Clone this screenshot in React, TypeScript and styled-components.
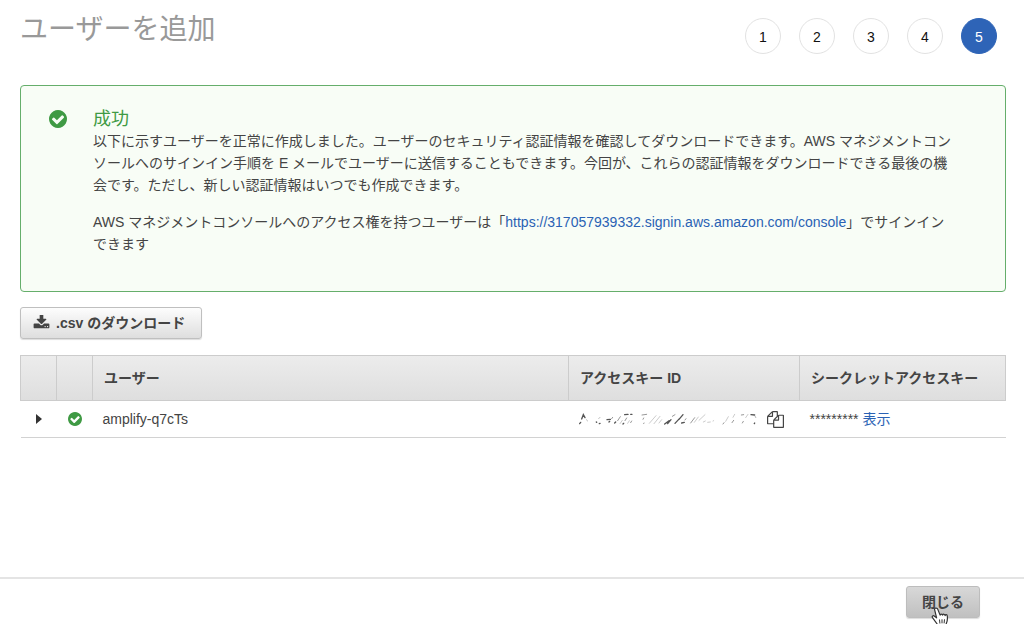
import React from 'react';
import styled, { createGlobalStyle, css } from 'styled-components';

const GlobalStyle = createGlobalStyle`
  *, *::before, *::after { box-sizing: border-box; }
  body {
    margin: 0;
    background: #fff;
    color: #444;
    font-family: "Liberation Sans", "Noto Sans CJK JP", sans-serif;
    font-size: 14px;
    line-height: 22px;
  }
`;

const Page = styled.div`
  display: flex;
  flex-direction: column;
  min-height: 100vh;
`;

const Header = styled.header`
  display: flex;
  justify-content: space-between;
  align-items: flex-start;
  padding: 10px 27px 0 20px;
`;

const Title = styled.h1`
  margin: 0;
  color: #999;
  font-size: 28px;
  font-weight: 400;
  line-height: 40px;
`;

const Steps = styled.ol`
  display: flex;
  gap: 18px;
  margin: 0;
  padding: 8px 0 0;
  list-style: none;
`;

const Step = styled.li<{ $current?: boolean }>`
  display: flex;
  align-items: center;
  justify-content: center;
  width: 36px;
  height: 36px;
  padding-top: 2px;
  border: 1px solid ${p => (p.$current ? '#2e64b7' : '#e2e2e2')};
  border-radius: 50%;
  background: ${p => (p.$current ? '#2e64b7' : '#fff')};
  color: ${p => (p.$current ? '#fff' : '#111')};
`;

const Main = styled.main`
  flex: 1;
  padding: 31px 18px 20px 20px;
`;

const Banner = styled.section`
  display: flex;
  gap: 26px;
  padding: 22px 28px 36px;
  border: 1px solid #65ae6b;
  border-radius: 4px;
  background: #f8fdf6;
`;

const BannerIcon = styled.div`
  display: flex;
  width: 18px;
  padding-top: 2px;
`;

const BannerTitle = styled.h2`
  margin: 0;
  color: #3f9a44;
  font-size: 18px;
  font-weight: 400;
  line-height: 22px;
`;

const Paragraph = styled.p`
  margin: 0 0 15px;
  &:last-child { margin-bottom: 0; }
`;

const Link = styled.a`
  color: #2a62b4;
  text-decoration: none;
`;

const Glyph = styled.svg<{ $size: number }>`
  display: block;
  flex: none;
  width: ${p => p.$size}px;
  height: ${p => p.$size}px;
  fill: currentColor;
`;

const Success = styled.span`
  display: flex;
  justify-content: center;
  color: #3f9a44;
`;

const Button = styled.button<{ $pressed?: boolean }>`
  display: inline-flex;
  align-items: center;
  gap: 6px;
  height: 32px;
  padding: 0 16px 0 12px;
  border: 1px solid #bfbfbf;
  border-radius: 3px;
  background: linear-gradient(#fdfdfd, #dedede);
  box-shadow: 0 1px 1px #ddd;
  color: #444;
  font: inherit;
  font-weight: 700;
  cursor: pointer;
  ${p => p.$pressed && css`
    padding: 0 15px;
    border-color: #bdbdbd;
    background: linear-gradient(#d8d8d8, #c0c0c0);
  `}
`;

const Toolbar = styled.div`
  display: flex;
  padding: 15px 0 16px;
`;

const Table = styled.table`
  width: 100%;
  border-collapse: collapse;
  table-layout: fixed;
`;

const HeadRow = styled.tr`
  height: 45px;
  background: linear-gradient(#ececec, #dedede);
`;

const HeadCell = styled.th<{ $width?: string }>`
  width: ${p => p.$width ?? 'auto'};
  padding: 0 11px;
  border: 1px solid #ccc;
  text-align: left;
`;

const BodyRow = styled.tr`
  height: 37px;
  border-bottom: 1px solid #d2d2d2;
`;

const Cell = styled.td`
  padding: 0 10px;
`;

const Expand = styled.button`
  display: flex;
  margin: 0 auto;
  padding: 0;
  border: 0;
  background: none;
  color: #333;
`;

const KeyLine = styled.div`
  display: flex;
  align-items: center;
  gap: 10px;
`;

const CopyButton = styled.button`
  padding: 0;
  border: 0;
  background: none;
  color: #444;
`;

const Footer = styled.footer`
  display: flex;
  justify-content: flex-end;
  padding: 7px 44px 6px;
  border-top: 2px solid #e4e4e4;
`;

const CloseArea = styled.div`
  position: relative;
  display: flex;
`;

const Pointer = styled.svg`
  position: absolute;
  top: 21px;
  left: 25px;
  width: 18px;
  height: 20px;
  pointer-events: none;
`;

const CheckIcon = ({ size }: { size: number }) => (
  <Glyph $size={size} viewBox="128 128 1536 1536" aria-hidden="true">
    <path d="M1412 734q0-28-18-46l-91-90q-19-19-45-19t-45 19l-408 407-226-226q-19-19-45-19t-45 19l-91 90q-18 18-18 46 0 27 18 45l362 362q19 19 45 19 27 0 46-19l543-543q18-18 18-45zm252 162q0 209-103 385.5t-279.5 279.5-385.5 103-385.5-103-279.5-279.5-103-385.5 103-385.5 279.5-279.5 385.5-103 385.5 103 279.5 279.5 103 385.5z" />
  </Glyph>
);

const DownloadIcon = () => (
  <Glyph $size={17} viewBox="0 128 1792 1792" aria-hidden="true">
    <path d="M1344 1344q0-26-19-45t-45-19-45 19-19 45 19 45 45 19 45-19 19-45zm256 0q0-26-19-45t-45-19-45 19-19 45 19 45 45 19 45-19 19-45zm128-224v320q0 40-28 68t-68 28h-1472q-40 0-68-28t-28-68v-320q0-40 28-68t68-28h465l135 136q58 56 136 56t136-56l136-136h464q40 0 68 28t28 68zm-325-569q17 41-14 70l-448 448q-18 19-45 19t-45-19l-448-448q-31-29-14-70 17-39 59-39h256v-448q0-26 19-45t45-19h256q26 0 45 19t19 45v448h256q42 0 59 39z" />
  </Glyph>
);

const CopyIcon = () => (
  <Glyph $size={17} viewBox="0 0 1792 1792" aria-hidden="true">
    <path d="M1696 384q40 0 68 28t28 68v1216q0 40-28 68t-68 28h-960q-40 0-68-28t-28-68v-288h-544q-40 0-68-28t-28-68v-672q0-40 20-88t48-76l408-408q28-28 76-48t88-20h416q40 0 68 28t28 68v328q68-40 128-40h416zm-544 213l-299 299h299v-299zm-640-384l-299 299h299v-299zm196 647l316-316v-416h-384v416q0 40-28 68t-68 28h-416v640h512v-256q0-40 20-88t48-76zm956 804v-1152h-384v416q0 40-28 68t-68 28h-416v640h896z" />
  </Glyph>
);

/* The key is scratched out; only scattered slanted remnants stay visible. */
const ObscuredKey = () => (
  <svg width="178" height="14" viewBox="90 216 534 42" fill="none" strokeLinecap="round" role="img" aria-label="アクセスキー ID">
    <g stroke="#555" strokeWidth="4">
      <path d="M92 251l3-4M98 237l5-13 5 9M142 246l1 1M151 251l2-1M174 239l10-1M180 246l2-2M197 249l3-3M222 252l2-2M227 224l10-1M245 223l4 0M347 252l14-10M356 251l10-12M378 250l14-15M390 238l12-14M398 249l8-2M606 224l11 1M616 251l1-2" />
    </g>
    <g stroke="#999" strokeWidth="3">
      <path d="M113 240l2 2M150 235l2-2M188 236l3-4M206 242l8-12M228 242l5-8M245 248l3-5M279 225l14-2M282 238l2-4M284 251l1-2M370 229l8-5M408 240l3-4M425 249l12-16M522 252l3-4M549 248l5-7M580 249l3-5M577 225l7-1M619 230l1 2" />
    </g>
    <g stroke="#ccc" strokeWidth="3">
      <path d="M301 250l20-23M315 251l18-22M330 249l8-10M436 247l12-16M450 241l18-17M463 246l6-3M476 247l8-1M492 243l2-1M530 244l8-14M552 232l5-9M590 233l7-10M213 251l7-10M236 250l5-8" />
    </g>
  </svg>
);

export default function App() {
  return (
    <>
      <GlobalStyle />
      <Page>
        <Header>
          <Title>ユーザーを追加</Title>
          <Steps>
            {[1, 2, 3, 4, 5].map(n => (
              <Step key={n} $current={n === 5} aria-current={n === 5 ? 'step' : undefined}>{n}</Step>
            ))}
          </Steps>
        </Header>
        <Main>
          <Banner>
            <BannerIcon><Success><CheckIcon size={18} /></Success></BannerIcon>
            <div>
              <BannerTitle>成功</BannerTitle>
              <Paragraph>
                以下に示すユーザーを正常に作成しました。ユーザーのセキュリティ認証情報を確認してダウンロードできます。AWS マネジメントコン<br />
                ソールへのサインイン手順を E メールでユーザーに送信することもできます。今回が、これらの認証情報をダウンロードできる最後の機<br />
                会です。ただし、新しい認証情報はいつでも作成できます。
              </Paragraph>
              <Paragraph>
                AWS マネジメントコンソールへのアクセス権を持つユーザーは「<Link href="https://317057939332.signin.aws.amazon.com/console">https://317057939332.signin.aws.amazon.com/console</Link>」でサインイン<br />
                できます
              </Paragraph>
            </div>
          </Banner>
          <Toolbar>
            <Button type="button"><DownloadIcon />.csv のダウンロード</Button>
          </Toolbar>
          <Table>
            <thead>
              <HeadRow>
                <HeadCell $width="36px" aria-label="展開" />
                <HeadCell $width="36px" aria-label="状態" />
                <HeadCell scope="col">ユーザー</HeadCell>
                <HeadCell scope="col" $width="231px">アクセスキー ID</HeadCell>
                <HeadCell scope="col" $width="206px">シークレットアクセスキー</HeadCell>
              </HeadRow>
            </thead>
            <tbody>
              <BodyRow>
                <Cell>
                  <Expand type="button" aria-label="展開">
                    <svg width="6" height="10" viewBox="0 0 6 10" fill="currentColor"><path d="M0 0l6 5-6 5z" /></svg>
                  </Expand>
                </Cell>
                <Cell><Success><CheckIcon size={14} /></Success></Cell>
                <Cell>amplify-q7cTs</Cell>
                <Cell>
                  <KeyLine>
                    <ObscuredKey />
                    <CopyButton type="button" aria-label="コピー"><CopyIcon /></CopyButton>
                  </KeyLine>
                </Cell>
                <Cell>********* <Link href="#show">表示</Link></Cell>
              </BodyRow>
            </tbody>
          </Table>
        </Main>
        <Footer>
          <CloseArea>
            <Button type="button" $pressed>閉じる</Button>
            <Pointer viewBox="0 0 18 20" aria-hidden="true">
              <path
                d="M5.5 1.2c-1-.5-2.200.2-1.900 1.500l2 8.200-2.400-1.900c-1.300-.8-2.500.5-1.700 1.700l4.500 6.100 1 3.200h7.500l.6-3c1.300-2.200 1.600-4.500 1.200-8-.2-1.600-1.900-1.700-2.200-.4-.2-1.700-2.200-1.800-2.500-.4-.4-1.500-2.300-1.500-2.500-.1L6.900 2.600c-.2-.8-.7-1.200-1.400-1.400z"
                fill="#fff" stroke="#333" strokeWidth="1.2" strokeLinejoin="round"
              />
              <path d="M8.500 12.500l.4 4M11 12.300v4M13.500 12.300l-.4 4" stroke="#333" strokeWidth="1" fill="none" />
            </Pointer>
          </CloseArea>
        </Footer>
      </Page>
    </>
  );
}
